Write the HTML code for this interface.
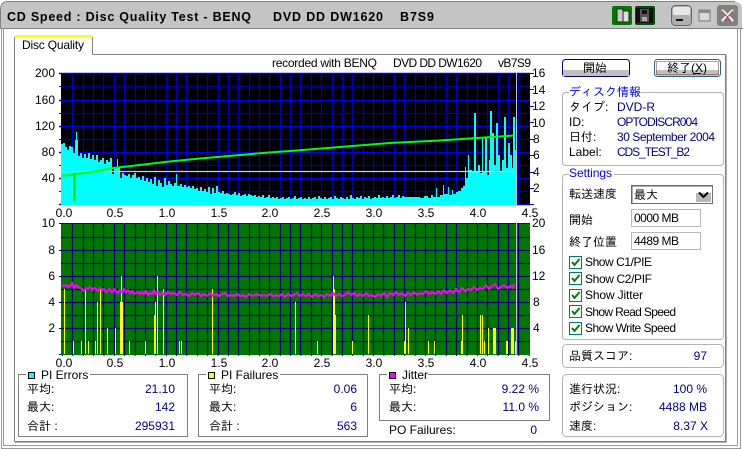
<!DOCTYPE html>
<html><head><meta charset="utf-8"><style>
html,body{margin:0;padding:0;background:#fff;width:743px;height:449px;overflow:hidden}
svg{display:block}
text{font-family:"Liberation Sans","IPAGothic","Noto Sans CJK JP",sans-serif;font-size:12px;fill:#000}
.b{fill:#0000ff}.n{fill:#000080}.e{text-anchor:end}.m{text-anchor:middle}
.t{font-weight:bold;font-size:12.5px;fill:#000}
.g{fill:none;stroke:#b4b4b4;stroke-width:1}
.d{fill:none;stroke:#808080;stroke-width:1}
</style></head><body>
<svg width="743" height="449" viewBox="0 0 743 449" xmlns="http://www.w3.org/2000/svg">
<rect width="743" height="449" fill="#fff"/>
<!-- window frame -->
<path d="M1 28V9Q1 2 8 2H735Q742 2 742 9V28Z" fill="#c4c4c4"/>
<path d="M.5 28V9Q1 1.500 8 1.500H735" fill="none" stroke="#808080"/>
<path d="M0 28.500H743" stroke="#808080" fill="none"/>
<path d="M1.500 28V448.500H741M3.500 28V445.500H737M737.500 28V446M740.500 28V449" fill="none" stroke="#9a9a9a"/>
<text class="t" x="7" y="21" textLength="244">CD Speed : Disc Quality Test - BENQ</text>
<text class="t" x="273" y="21" textLength="110">DVD DD DW1620</text>
<text class="t" x="400" y="21" textLength="34">B7S9</text>
<!-- title icons -->
<rect x="612" y="6" width="20" height="19" rx="2" fill="#007a00"/>
<rect x="617" y="9" width="6" height="13" fill="#c8c8c8" stroke="#222"/>
<rect x="623" y="11" width="6" height="11" fill="#ddd" stroke="#222"/>
<rect x="635" y="6" width="20" height="19" rx="2" fill="#005000"/>
<rect x="636" y="8" width="17" height="15" fill="#111"/>
<path d="M640 9h9v13h-9z" fill="#555"/><rect x="642" y="10" width="5" height="4" fill="#111"/><rect x="642" y="17" width="5" height="4" fill="#aaa"/>
<rect x="671.500" y="5.500" width="20" height="20" rx="4" fill="#b0b0b0" stroke="#666"/>
<rect x="673" y="7" width="17" height="8" rx="2" fill="#e8e8e8"/>
<rect x="676" y="19" width="7" height="2" fill="#111"/>
<rect x="694" y="5" width="20" height="21" rx="4" fill="#c8c8c8"/>
<rect x="699" y="10" width="11" height="11" fill="#d8d8d8" stroke="#777"/>
<rect x="699" y="10" width="11" height="3" fill="#8a8a8a"/>
<rect x="717" y="5" width="21" height="21" rx="3" fill="#808080"/>
<path d="M722 10L733 21M733 10L722 21" stroke="#f4f4f4" stroke-width="2.500"/>
<path d="M722 11L731 21M733 11L724 21" stroke="#a02020" stroke-width=".7"/>
<!-- tab + panel -->
<path d="M14.500 54.500V39Q14.500 35.500 18 35.500H89Q92.500 35.500 92.500 39V54.500" fill="#fff" stroke="#808080"/>
<path d="M15 37V36.500Q15 35 18 35H89Q92 35 92 37V37.500H15Z" fill="#ffff00"/>
<path d="M92.500 54.500H725.500V441.500H14.500V54.500" fill="none" stroke="#808080"/>
<path d="M726.500 55V442.500H15" fill="none" stroke="#b0b0b0"/>
<text x="22" y="49" textLength="62">Disc Quality</text>
<text x="272" y="67" textLength="105">recorded with BENQ</text>
<text x="393" y="67" textLength="89">DVD DD DW1620</text>
<text x="498" y="67" textLength="33">vB7S9</text>

<!-- top plot -->
<rect x="61" y="73" width="469" height="132" fill="#000"/>
<defs><path id="v" d="M72.500 0V132M83.500 0V132M93.500 0V132M103.500 0V132M114.500 0V132M124.500 0V132M135.500 0V132M145.500 0V132M155.500 0V132M166.500 0V132M176.500 0V132M186.500 0V132M197.500 0V132M207.500 0V132M218.500 0V132M228.500 0V132M238.500 0V132M249.500 0V132M259.500 0V132M269.500 0V132M280.500 0V132M290.500 0V132M300.500 0V132M311.500 0V132M321.500 0V132M332.500 0V132M342.500 0V132M352.500 0V132M363.500 0V132M373.500 0V132M383.500 0V132M394.500 0V132M404.500 0V132M415.500 0V132M425.500 0V132M435.500 0V132M446.500 0V132M456.500 0V132M467.500 0V132M477.500 0V132M487.500 0V132M498.500 0V132M508.500 0V132M518.500 0V132"/></defs>
<use href="#v" y="73" fill="none" stroke="#0000c0" stroke-width="1.200"/>
<path d="M61 86.500H530M61 113.500H530M61 139.500H530M61 165.500H530M61 191.500H530" stroke="#0000a0" fill="none" stroke-width="1.200"/>
<path d="M59 73.500H530M59 100.500H530M59 126.500H530M59 152.500H530M59 178.500H530M59 204.500H530" stroke="#0000f0" fill="none" stroke-width="1.500"/>
<path d="M59 86.500h2M59 113.500h2M59 139.500h2M59 165.500h2M59 191.500h2M530 73.500h4M530 89.500h4M530 106.500h4M530 122.500h4M530 139.500h4M530 155.500h4M530 172.500h4M530 188.500h4M530 204.500h4" stroke="#0000d0" fill="none"/>
<path fill="#00ffff" d="M61 205V144h2V143h2V147h2V150h2V146h2V147h2V153h2V140h1V132h1V140h1V156h2V153h2V158h2V154h2V158h2V153h2V159h2V155h2V160h2V155h2V162h2V160h2V158h2V164h2V160h2V162h2V158h2V174h2V168h2V167h1V159h1V168h2V178h2V173h2V175h2V176h2V174h2V178h2V175h2V173h2V178h2V177h2V180h2V176h2V181h2V178h2V182h2V179h2V184h2V177h2V186h2V180h2V183h2V187h2V178h2V185h2V181h2V184h2V186h2V183h2V174h1V186h3V184h2V187h2V185h2V187h2V186h2V188h2V186h2V189h2V188h2V191h2V187h2V191h2V189h2V192h2V187h2V194h2V188h2V193h2V186h2V192h2V193h2V191h2V194h2V193h2V194h2V195h2V194h2V192h2V195h2V193h2V196h2V195h2V194h2V196h2V194h2V195h2V196h2V195h2V197h2V196h2V197h2V195h2V198h2V197h2V195h2V198h2V197h2V198h2V197h2V199h2V198h2V197h2V199h2V198h2V197h2V199h2V198h2V196h2V199h2V198h2V197h2V199h2V198h2V199h2V197h2V199h2V198h2V197h2V199h2V196h2V198h2V199h2V197h2V199h2V198h2V197h2V199h2V196h2V198h2V199h2V197h2V198h2V199h2V197h2V199h2V195h2V198h2V199h2V197h2V198h2V196h2V199h2V197h2V198h2V196h2V199h2V198h2V197h2V198h2V195h2V198h2V197h2V198h2V196h2V198h2V197h2V195h2V198h2V197h2V195h2V198h2V196h2V197H420V198H424V196H428V198H431V195H433V197H436V188H437V197H440V195H443V185H444V194H448V187H449V195H452V190H453V194H456V192H458V191H461V188H463V186H465V167H466V178H468V155H469V170H472V172H474V113H476V172H478V165H480V173H482V138H483V172H485V137H487V175H489V160H490V111H492V133H494V165H496V123H498V155H500V172H502V160H504V117H506V168H508V143H510V155H512V168H513V117H515V150H517V205Z"/>
<path d="M61 171.500H514" stroke="#d0d0d0" fill="none" stroke-width="1.200"/>
<path d="M62 175.700L90 172.300L113 168L140 165L165 162L200 158.500L269 152.500L290 151L340 147L390 143L440 140.500L477 138L514 135.500" fill="none" stroke="#00ff00" stroke-width="2"/>
<path d="M74.500 173V201" stroke="#00e000" stroke-width="2" fill="none"/>
<path d="M516.500 73V205" stroke="#c0c0c0" fill="none"/>

<!-- bottom plot -->
<rect x="61" y="223" width="469" height="132" fill="#007800"/>
<use href="#v" y="223" fill="none" stroke="#000080" stroke-width="1.300"/>
<path d="M61 237.500H530M61 250.500H530M61 263.500H530M61 276.500H530M61 289.500H530M61 302.500H530M61 315.500H530M61 328.500H530M61 341.500H530" stroke="#000080" fill="none" stroke-width="1.300"/>
<path d="M61 223.500H530" stroke="#0000e0" fill="none"/>
<path fill="#ffff00" d="M64 289h1v65h-1zM73 341h1v13h-1zM81 341h1v13h-1zM85 289h1v65h-1zM88 341h1v13h-1zM95 341h1v13h-1zM97 302h1v52h-1zM100 289h1v65h-1zM107 328h1v26h-1zM115 328h1v26h-1zM121 276h1v78h-1zM120 302h3v52h-3zM129 341h1v13h-1zM145 341h1v13h-1zM154 315h2v39h-2zM155 302h1v13h-1zM157 276h1v78h-1zM163 289h1v65h-1zM179 341h1v13h-1zM181 341h1v13h-1zM212 289h1v65h-1zM295 302h1v52h-1zM317 341h1v13h-1zM333 276h1v78h-1zM333 289h2v65h-2zM334 315h2v39h-2zM352 341h1v13h-1zM368 315h1v39h-1zM404 341h2v13h-2zM405 302h1v39h-1zM408 328h1v26h-1zM428 341h1v13h-1zM434 341h1v13h-1zM461 341h2v13h-2zM462 315h1v26h-1zM480 315h1v39h-1zM482 315h1v39h-1zM484 341h1v13h-1zM488 328h1v26h-1zM493 328h3v26h-3zM506 341h2v13h-2zM511 328h3v26h-3zM515 341h2v13h-2z"/>
<polyline fill="none" stroke="#ff00ff" stroke-width="2" points="62,285 64,286 66,285 68,287 70,286 72,283 74,288 76,285 78,287 80,288 82,289 84,291 86,288 88,289 90,287 92,290 94,288 96,289 98,291 100,288 102,290 104,289 106,292 108,290 110,289 112,292 114,289 116,291 118,293 120,290 122,292 124,289 126,292 128,290 130,293 132,291 134,294 136,293 138,292 140,294 142,292 144,294 146,291 148,295 150,293 152,294 154,290 156,294 158,292 160,295 162,293 165,295 168,292 171,294 174,293 177,295 180,292 183,295 186,294 189,296 192,293 195,295 198,293 201,296 204,294 207,296 210,293 213,296 216,294 219,296 222,294 225,293 228,296 231,295 234,296 237,294 240,296 243,295 246,297 249,294 252,296 255,295 258,294 261,296 264,295 267,296 270,294 273,296 276,295 279,296 282,294 285,297 288,294 291,296 294,295 297,293 300,296 303,294 306,296 309,294 312,297 315,294 318,296 321,295 324,297 327,294 330,296 333,293 336,296 339,294 342,296 345,295 348,292 351,295 354,293 357,296 360,294 363,296 366,293 369,296 372,295 375,297 378,294 381,296 384,293 387,297 390,293 393,295 396,292 399,295 402,293 405,296 408,293 411,295 414,292 417,295 420,293 423,294 426,291 429,294 432,292 435,294 438,291 441,294 444,290 447,293 450,290 453,293 456,289 459,292 462,288 465,291 468,289 471,290 474,287 477,290 480,288 483,289 486,285 489,289 492,286 495,284 498,289 501,287 504,285 507,288 510,286 513,288 514,284"/>
<path d="M516.500 223V355" stroke="#c0c0c0" fill="none"/>
<path d="M59 223.500h2M59 250.500h2M59 276.500h2M59 302.500h2M59 328.500h2M59 354.500h2" stroke="#0000d0" fill="none"/>
<path d="M62 355.500H530" stroke="#0000c0" stroke-dasharray="1 9.370" fill="none"/>

<!-- axis labels -->
<g>
<text class="e" x="55" y="77">200</text><text class="e" x="55" y="104">160</text><text class="e" x="55" y="130">120</text><text class="e" x="55" y="156">80</text><text class="e" x="55" y="182">40</text>
<text x="532" y="77">16</text><text x="532" y="94">14</text><text x="532" y="110">12</text><text x="532" y="127">10</text><text x="533" y="143">8</text><text x="533" y="159">6</text><text x="533" y="176">4</text><text x="533" y="192">2</text>
<text class="e" x="55" y="227">10</text><text class="e" x="55" y="254">8</text><text class="e" x="55" y="280">6</text><text class="e" x="55" y="306">4</text><text class="e" x="55" y="332">2</text>
<text x="532" y="227">20</text><text x="532" y="254">16</text><text x="532" y="280">12</text><text x="533" y="306">8</text><text x="533" y="332">4</text>
</g>
<g>
<text class="m" x="64" y="217">0.0</text><text class="m" x="115" y="217">0.5</text><text class="m" x="167" y="217">1.0</text><text class="m" x="219" y="217">1.5</text><text class="m" x="270" y="217">2.0</text><text class="m" x="322" y="217">2.5</text><text class="m" x="374" y="217">3.0</text><text class="m" x="426" y="217">3.5</text><text class="m" x="478" y="217">4.0</text><text class="m" x="530" y="217">4.5</text>
<text class="m" x="64" y="367">0.0</text><text class="m" x="115" y="367">0.5</text><text class="m" x="167" y="367">1.0</text><text class="m" x="219" y="367">1.5</text><text class="m" x="270" y="367">2.0</text><text class="m" x="322" y="367">2.5</text><text class="m" x="374" y="367">3.0</text><text class="m" x="426" y="367">3.5</text><text class="m" x="478" y="367">4.0</text><text class="m" x="530" y="367">4.5</text>
</g>

<!-- stat boxes -->
<path d="M26 374.500H18.500V436.500H187.500V374.500H90" class="d"/>
<rect x="28.500" y="372.500" width="6" height="6" fill="#00ffff" stroke="#000"/>
<text x="41" y="379">PI Errors</text>
<text x="27" y="393">平均:</text><text x="27" y="411">最大:</text><text x="27" y="430">合計 :</text>
<text class="e n" x="175" y="393">21.10</text><text class="e n" x="175" y="411">142</text><text class="e n" x="175" y="430">295931</text>

<path d="M206 374.500H198.500V436.500H367.500V374.500H280" class="d"/>
<rect x="208.500" y="372.500" width="6" height="6" fill="#ffff00" stroke="#000"/>
<text x="221" y="379">PI Failures</text>
<text x="209" y="393">平均:</text><text x="209" y="411">最大:</text><text x="209" y="430">合計 :</text>
<text class="e n" x="357" y="393">0.06</text><text class="e n" x="357" y="411">6</text><text class="e n" x="357" y="430">563</text>

<path d="M387 374.500H379.500V420.500H549.500V374.500H428" class="d"/>
<rect x="389.500" y="372.500" width="6" height="6" fill="#ff00ff" stroke="#000"/>
<text x="402" y="379">Jitter</text>
<text x="389" y="393">平均:</text><text x="389" y="411">最大:</text>
<text class="e n" x="539" y="393">9.22 %</text><text class="e n" x="539" y="411">11.0 %</text>
<text x="389" y="434">PO Failures:</text><text class="e n" x="537" y="434">0</text>

<!-- buttons -->
<rect x="562.500" y="59.500" width="67" height="17" rx="3" fill="#fff" stroke="#000080"/>
<rect x="563" y="70" width="66" height="6" fill="#c0c0c0"/>
<text class="m" x="595" y="72">開始</text>
<rect x="654.500" y="59.500" width="66" height="17" rx="3" fill="#fff" stroke="#2a6a80"/>
<rect x="656" y="70" width="63" height="6" fill="#c0c0c0"/>
<rect x="656.500" y="61.500" width="62" height="13" fill="none" stroke="#803030" stroke-dasharray="1 1"/>
<text class="m" x="687" y="72">終了(X)</text>
<path d="M693 73.500h8" stroke="#000" fill="none"/>

<!-- disc info -->
<path d="M569 92.500H566Q562.500 92.500 562.500 96V162Q562.500 165.500 566 165.500H720Q723.500 165.500 723.500 162V96Q723.500 92.500 720 92.500H630" class="g"/>
<text class="b" x="569" y="96">ディスク情報</text>
<text x="569" y="111">タイプ:</text><text x="569" y="126">ID:</text><text x="569" y="141">日付:</text><text x="569" y="156">Label:</text>
<text class="n" x="617" y="111">DVD-R</text><text class="n" x="617" y="126" textLength="81">OPTODISCR004</text><text class="n" x="617" y="141" textLength="98">30 September 2004</text><text class="n" x="617" y="156" textLength="73">CDS_TEST_B2</text>

<!-- settings -->
<path d="M569 174.500H566Q562.500 174.500 562.500 178V336Q562.500 339.500 566 339.500H720Q723.500 339.500 723.500 336V178Q723.500 174.500 720 174.500H614" class="g"/>
<text class="b" x="569" y="177" textLength="43">Settings</text>
<text x="569" y="198">転送速度</text><text x="569" y="224">開始</text><text x="569" y="246">終了位置</text>
<rect x="631.500" y="185.500" width="81" height="18" fill="#fff" stroke="#707070"/>
<path d="M632 204V186H712" fill="none" stroke="#606060"/>
<rect x="696" y="187" width="15" height="15" fill="#b8b8b8"/><rect x="696" y="187" width="15" height="6" fill="#fff"/>
<path d="M699 192.500L703.500 197L708 192.500" fill="none" stroke="#000" stroke-width="2"/>
<text x="634" y="199">最大</text>
<rect x="631.500" y="209.500" width="69" height="17" fill="#fff" stroke="#b8b8b8"/>
<rect x="631.500" y="232.500" width="69" height="17" fill="#fff" stroke="#b8b8b8"/>
<text x="634" y="222" textLength="45">0000 MB</text><text x="634" y="245" textLength="45">4489 MB</text>
<g fill="#fff" stroke="#007a70">
<rect x="569.500" y="256.500" width="12" height="12"/><rect x="569.500" y="272.500" width="12" height="12"/><rect x="569.500" y="289.500" width="12" height="12"/><rect x="569.500" y="305.500" width="12" height="12"/><rect x="569.500" y="322.500" width="12" height="12"/>
</g>
<g fill="none" stroke="#008000" stroke-width="2">
<path d="M572 262l2.500 3 5-6"/><path d="M572 278l2.500 3 5-6"/><path d="M572 295l2.500 3 5-6"/><path d="M572 311l2.500 3 5-6"/><path d="M572 328l2.500 3 5-6"/>
</g>
<text x="585" y="266" textLength="67">Show C1/PIE</text><text x="585" y="283" textLength="67">Show C2/PIF</text><text x="585" y="299" textLength="58">Show Jitter</text><text x="585" y="316" textLength="91">Show Read Speed</text><text x="585" y="332" textLength="91">Show Write Speed</text>

<!-- score -->
<rect x="562.500" y="344.500" width="161" height="23" rx="4" class="g"/>
<text x="569" y="360">品質スコア:</text><text class="e n" x="707" y="360">97</text>
<rect x="562.500" y="374.500" width="161" height="62" rx="4" class="g"/>
<text x="569" y="393">進行状況:</text><text x="569" y="411">ポジション:</text><text x="569" y="430">速度:</text>
<text class="e n" x="707" y="393">100 %</text><text class="e n" x="707" y="411">4488 MB</text><text class="e n" x="708" y="430">8.37 X</text>
</svg>
</body></html>
